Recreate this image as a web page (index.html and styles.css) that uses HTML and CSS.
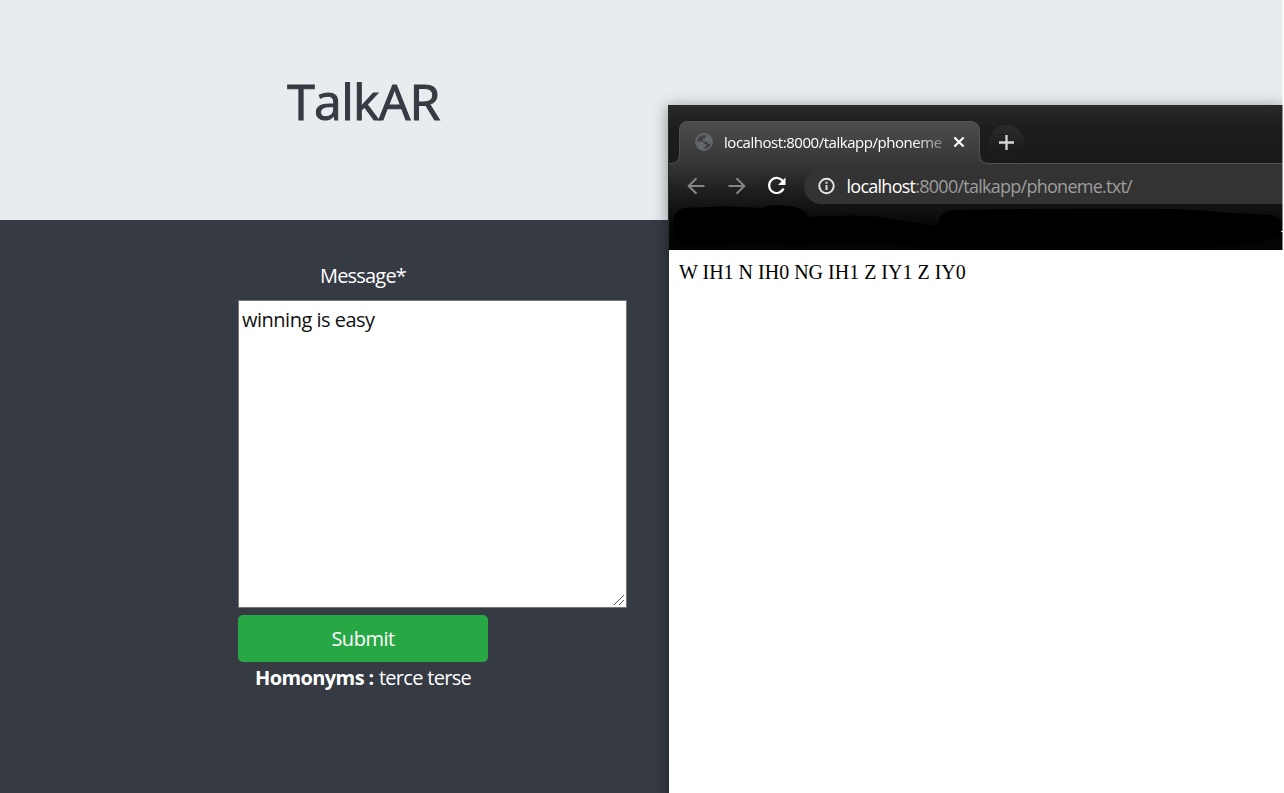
FILE: index.html
```html
<!DOCTYPE html>
<html lang="en">
<head>
<meta charset="utf-8">
<title>TalkAR</title>
<link rel="stylesheet" href="styles.css">
</head>
<body>
<header class="hero"><h1 class="title">TalkAR</h1></header>
<main class="panel">
  <form class="form">
    <label class="label" for="message">Message*</label>
    <div class="message-box">
      <textarea class="message" id="message" spellcheck="false">winning is easy</textarea>
      <svg class="grip" width="12" height="12" viewBox="0 0 12 12"><path d="M1 11L11 1M6 11L11 6" stroke="#555" stroke-width="1"/></svg>
    </div>
    <button class="submit" type="button"><span class="submit-text">Submit</span></button>
    <p class="homonyms"><b class="homonyms-key">Homonyms :</b> <span class="homonyms-list">terce terse</span></p>
  </form>
</main>
<section class="window">
  <div class="chrome">
    <svg class="chrome-art" width="615" height="145" viewBox="0 0 615 145">
      <defs>
        <linearGradient id="strip" x1="0" y1="0" x2="0" y2="1"><stop offset="0" stop-color="#292929"/><stop offset=".42" stop-color="#1c1c1c"/><stop offset="1" stop-color="#1a1a1a"/></linearGradient>
        <linearGradient id="tab" gradientUnits="userSpaceOnUse" x1="0" y1="16" x2="0" y2="130"><stop offset="0" stop-color="#4e4e4e"/><stop offset=".37" stop-color="#363636"/><stop offset=".58" stop-color="#222"/><stop offset=".86" stop-color="#0a0a0a"/><stop offset="1" stop-color="#040404"/></linearGradient>
        <linearGradient id="plus" x1="0" y1="0" x2="0" y2="1"><stop offset="0" stop-color="#2c2c2c"/><stop offset=".7" stop-color="#1c1c1c"/></linearGradient>
      </defs>
      <rect width="615" height="60" fill="url(#strip)"/>
      <path d="M0 58.500H2Q10.500 58.500 10.500 49V25Q10.500 16.500 19 16.500H301Q310.500 16.500 310.500 26V49Q310.500 58.500 320 58.500H615V145H0Z" fill="url(#tab)"/>
      <path d="M0 58.500H2Q10.500 58.500 10.500 49V25Q10.500 16.500 19 16.500H301Q310.500 16.500 310.500 26V49Q310.500 58.500 320 58.500H615" fill="none" stroke="#515151"/>
      <circle cx="337.500" cy="37.500" r="17.500" fill="url(#plus)"/>
      <path d="M330 37.500H345M337.500 30V45" stroke="#d4d7d7" stroke-width="2.300"/>
      <path d="M4 127Q2 103 17 103Q58 100 92 103Q104 98 126 102Q137 105 139 112Q185 109 212 112Q241 118 269 121Q268 108 285 105Q397 103 505 104Q535 105 561 108L603 110Q614 114 613 125Q612 134 593 136Q563 142 505 144L375 145H267Q220 138 176 137Q128 142 108 139Q61 139 17 142Q7 139 4 127Z" fill="#000"/>
      <path d="M612 126.500H615" stroke="#ddd"/>
    </svg>
    <div class="tab">
      <svg class="globe" width="18" height="18" viewBox="0 0 18 18"><circle cx="9" cy="9" r="8" fill="none" stroke="#63676c" stroke-width="1.800"/><path d="M1.500 8.500H6Q9 8.700 9 11H11V13.500L9.500 14V16.500Q3 17 1.500 8.500Z" fill="#63676c"/><path d="M9 1.500H12V3.500L10 4V6H8L7.500 8.500H12L13.500 11H15.500Q18 7 14.500 3.500L12 1.500Z" fill="#63676c"/></svg>
      <span class="tab-title"><span class="tab-text">localhost:8000/talkapp/phoneme</span></span>
      <svg class="close" width="12" height="12" viewBox="0 0 12 12"><path d="M1.400 1.400L10.600 10.600M10.600 1.400L1.400 10.600" stroke="#fff" stroke-width="2.100"/></svg>
    </div>
    <div class="toolbar">
      <svg class="nav" width="118" height="36" viewBox="0 0 118 36" fill="none">
        <path d="M35.500 18H20M27.500 10.200L19.700 18L27.500 25.800" stroke="#858585" stroke-width="2"/>
        <path d="M59.500 18H75M67.500 10.200L75.300 18L67.500 25.800" stroke="#858585" stroke-width="2"/>
        <path d="M114 13.500A7.500 7.500 0 1 0 114.500 20.500" stroke="#fff" stroke-width="2.200"/>
        <path d="M116.500 9.500V17H109Z" fill="#fff"/>
      </svg>
      <div class="address">
        <svg class="info" width="18" height="18" viewBox="0 0 18 18"><circle cx="8.500" cy="9" r="7.200" fill="none" stroke="#e4e4e4" stroke-width="2"/><path d="M8.500 8V13M8.500 4.800V6.700" stroke="#e4e4e4" stroke-width="1.900"/></svg>
        <span class="url"><span class="host">localhost</span><span class="path">:8000/talkapp/phoneme.txt/</span></span>
      </div>
    </div>
  </div>
  <div class="document"><span class="phonemes">W IH1 N IH0 NG IH1 Z IY1 Z IY0</span></div>
</section>
</body>
</html>
```

FILE: styles.css
```css
* { box-sizing: border-box; }
body { margin: 0; width: 1284px; height: 793px; overflow: hidden; position: relative; background: #363a43; color: #fff; font: 20px/30px "Open Sans", "Noto Sans", sans-serif; }
body::after { content: ""; position: absolute; top: 0; right: 0; width: 2px; height: 100%; background: linear-gradient(90deg, rgba(255,255,255,.5) 50%, #fff 50%); }
.hero { height: 220px; background: #e8ecef; padding: 71px 0 0 238px; }
.title { width: 251px; margin: 0; color: #363a42; text-align: center; font-size: 50px; line-height: 60px; font-weight: 500; letter-spacing: -.7px; -webkit-text-stroke: 1px #363a42; }
.panel { height: 573px; padding: 41px 0 0 238px; }
.form { width: 389px; display: flex; flex-direction: column; align-items: flex-start; }
.label, .homonyms { width: 250px; text-align: center; }
.label { letter-spacing: -.8px; }
.message-box { position: relative; width: 389px; height: 308px; margin: 9px 0 7px; }
.message { display: block; width: 389px; height: 308px; margin: 0; padding: 4px 3px; border: 1px solid #767676; border-radius: 0; outline: 0; background: #fff; color: #111; font: inherit; letter-spacing: -.5px; resize: none; }
.grip { position: absolute; right: 2px; bottom: 2px; }
.submit { width: 250px; height: 47px; padding: 0; border: 0; border-radius: 5px; background: #28a745; color: #fff; font: inherit; letter-spacing: -.5px; }
.homonyms { margin: 1px 0 0; white-space: nowrap; }
.homonyms-key { letter-spacing: -.6px; }
.homonyms-list { letter-spacing: -.7px; }
.window { position: absolute; left: 668px; top: 105px; width: 616px; height: 688px; box-shadow: 0 2px 14px rgba(0,0,0,.42); border-left: 1px solid #292b2d; background: #fff; }
.chrome { position: relative; width: 615px; height: 145px; padding-top: 16px; overflow: hidden; }
.chrome-art { position: absolute; inset: 0; }
.tab { position: relative; height: 42px; padding-left: 26px; display: flex; align-items: center; }
.tab-title { width: 220px; margin-left: 11px; white-space: nowrap; font-size: 15px; line-height: 24px; letter-spacing: -.46px; -webkit-mask-image: linear-gradient(90deg, #000 86%, rgba(0,0,0,.3)); mask-image: linear-gradient(90deg, #000 86%, rgba(0,0,0,.3)); }
.close { margin-left: 9px; }
.toolbar { position: relative; height: 41px; display: flex; align-items: center; padding-top: 5px; }
.address { width: 480px; height: 35px; margin-left: 17px; padding-left: 14px; display: flex; align-items: center; background: #333; border-radius: 18px 0 0 18px; }
.url { margin-left: 10.500px; font-size: 18px; line-height: 30px; white-space: nowrap; letter-spacing: -.74px; }
.path { color: #9d9d9d; }
.document { height: 543px; padding: 7px 0 0 10px; color: #000; font: 20px/30px "Liberation Serif", "Times New Roman", serif; background: #fff; }
```
